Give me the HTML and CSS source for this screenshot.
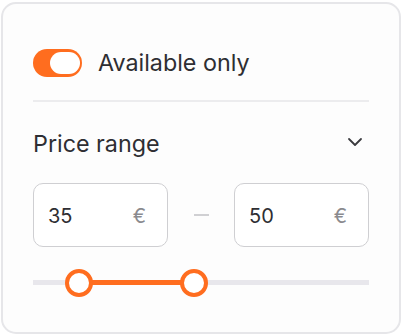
FILE: index.html
```html
<!DOCTYPE html>
<html>
<head>
<meta charset="utf-8">
<link rel="stylesheet" href="styles.css">
</head>
<body>
<div class="card">
  <div class="avail-row">
    <div class="toggle"><span class="knob"></span></div>
    <span class="avail-label">Available only</span>
  </div>
  <div class="divider"></div>
  <div class="price-head">
    <span class="price-title">Price range</span>
    <svg class="chev" width="16" height="10" viewBox="0 0 16 10"><path d="M2 2 L8 8 L14 2" fill="none" stroke="#3a3a3e" stroke-width="1.8" stroke-linecap="round" stroke-linejoin="round"/></svg>
  </div>
  <div class="inputs">
    <div class="field"><span class="val">35</span><span class="cur">€</span></div>
    <div class="dash"></div>
    <div class="field"><span class="val">50</span><span class="cur">€</span></div>
  </div>
  <div class="slider">
    <div class="track"></div>
    <div class="fill" style="left:46px;width:115px"></div>
    <div class="thumb" style="left:46px"></div>
    <div class="thumb" style="left:161px"></div>
  </div>
</div>
</body>
</html>
```
FILE: styles.css
```css
html, body { margin: 0; padding: 0; background: #ffffff; }
body { padding: 2px 0 0 1px; font-family: Inter, "Noto Sans", sans-serif; color: #2b2b30; }
.card {
  width: 400px;
  height: 332px;
  box-sizing: border-box;
  border: 2px solid #e6e6e9;
  border-radius: 15px;
  background: #fdfdfd;
  padding: 45px 30px 0 30px;
}
.avail-row { display: flex; align-items: center; height: 28px; gap: 16px; }
.toggle {
  width: 49px; height: 28px; border-radius: 14px; background: #ff6d1f;
  box-sizing: border-box; padding: 3px 2px 3px 0; display: flex; justify-content: flex-end;
}
.knob { width: 30px; height: 22px; border-radius: 11px; background: #fff; }
.avail-label { font-size: 23.3px; line-height: 28px; color: #2e2e33; }
.divider { height: 2px; background: #ececee; margin-top: 23px; }
.price-head { display: flex; justify-content: space-between; align-items: center; height: 28px; margin-top: 28px; }
.price-title { font-size: 23.3px; line-height: 28px; color: #2e2e33; }
.chev { margin-right: 6px; margin-top: -4px; }
.inputs { display: flex; align-items: center; margin-top: 25px; gap: 0; }
.field {
  width: 135px; height: 64px; box-sizing: border-box; border: 1px solid #cfcfd2; border-radius: 10px;
  display: flex; align-items: center; justify-content: space-between; padding: 2px 21px 0 14px; background: #fff;
}
.val { font-size: 20px; color: #2e2e33; }
.cur { font-size: 20px; color: #8a8a8e; }
.dash { width: 15px; height: 2px; background: #d0d0d3; margin: 0 25px 0 26px; }
.slider { position: relative; height: 28px; margin-top: 22px; }
.track { position: absolute; left: 0; right: 0; top: 11px; height: 5px; background: #e8e7ec; }
.fill { position: absolute; top: 11px; height: 5px; background: #ff6d1f; }
.thumb {
  position: absolute; top: 0; width: 28px; height: 28px; margin-left: -14px; box-sizing: border-box;
  border: 4px solid #ff6d1f; border-radius: 50%; background: #fff;
}
```
